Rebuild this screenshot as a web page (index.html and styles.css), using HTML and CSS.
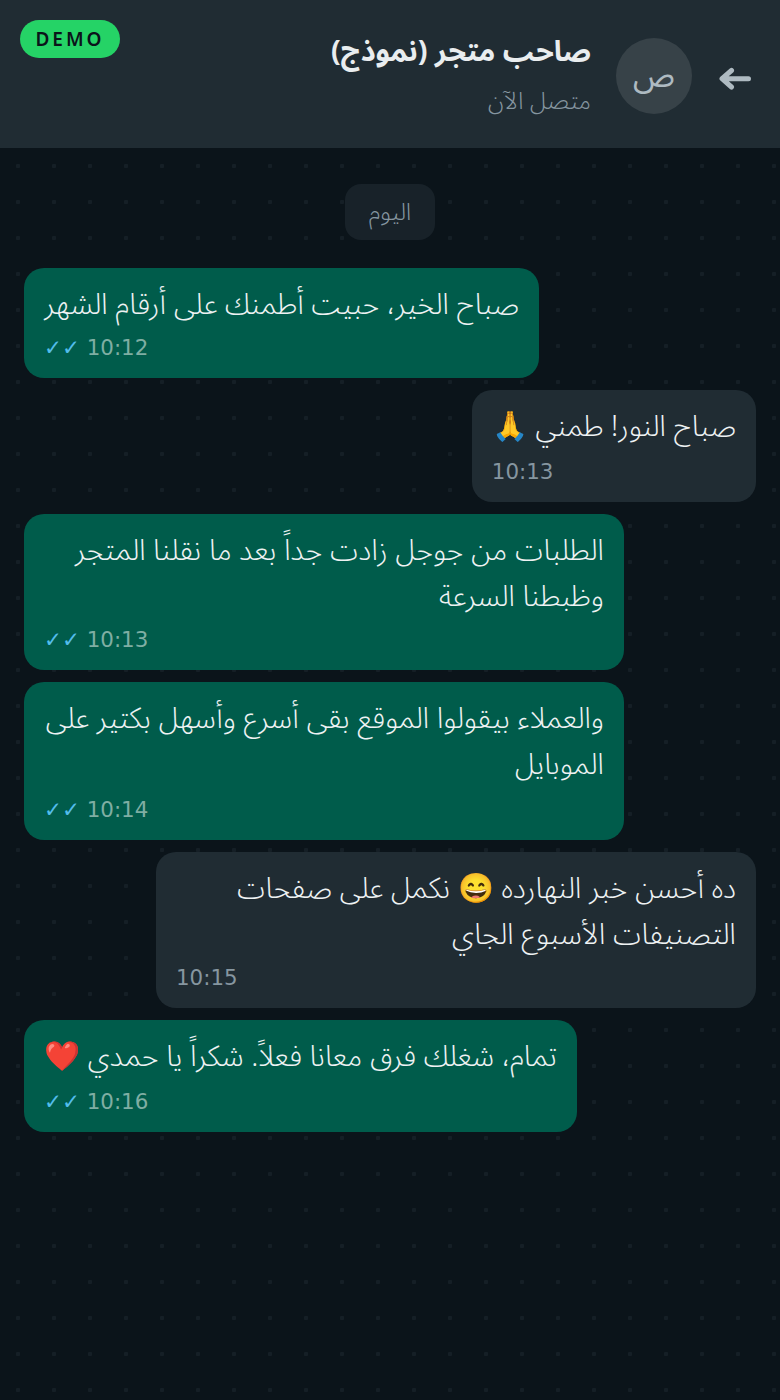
FILE: index.html
```html
<!DOCTYPE html>
<html dir="rtl">
<head>
<meta charset="utf-8">
<title>محادثة</title>
<link rel="stylesheet" href="styles.css">
</head>
<body>
<div class="app">
  <header class="topbar">
    <svg class="back" viewBox="0 0 32 24" width="32" height="24" aria-hidden="true">
      <path d="M29.500 12.700H7M12.500 4.500 3 12.700 12.500 21" fill="none" stroke="#aebac1" stroke-width="5" stroke-linecap="round" stroke-linejoin="round"/>
    </svg>
    <div class="avatar">ص</div>
    <div class="who">
      <div class="name">صاحب متجر (نموذج)</div>
      <div class="status">متصل الآن</div>
    </div>
    <span class="demo">DEMO</span>
  </header>
  <main class="chat">
    <div class="day">اليوم</div>
    <div class="msg out">
      <div class="text">صباح الخير، حبيت أطمنك على أرقام الشهر</div>
      <div class="meta"><span class="ticks">✓✓</span> <span>10:12</span></div>
    </div>
    <div class="msg in">
      <div class="text">صباح النور! طمني 🙏</div>
      <div class="meta gap"><span>10:13</span></div>
    </div>
    <div class="msg out">
      <div class="text">الطلبات من جوجل زادت جداً بعد ما نقلنا المتجر وظبطنا السرعة</div>
      <div class="meta"><span class="ticks">✓✓</span> <span>10:13</span></div>
    </div>
    <div class="msg out">
      <div class="text">والعملاء بيقولوا الموقع بقى أسرع وأسهل بكتير على الموبايل</div>
      <div class="meta gap"><span class="ticks">✓✓</span> <span>10:14</span></div>
    </div>
    <div class="msg in">
      <div class="text">ده أحسن خبر النهارده 😄 نكمل على صفحات التصنيفات الأسبوع الجاي</div>
      <div class="meta"><span>10:15</span></div>
    </div>
    <div class="msg out">
      <div class="text">تمام، شغلك فرق معانا فعلاً. شكراً يا حمدي ❤️</div>
      <div class="meta gap"><span class="ticks">✓✓</span> <span>10:16</span></div>
    </div>
  </main>
</div>
</body>
</html>
```

FILE: styles.css
```css
* { box-sizing: border-box; }
html, body { margin: 0; height: 100%; }
body {
  font-family: "Noto Sans Arabic", "DejaVu Sans", sans-serif;
  background: #0b141a;
  color: #e9edef;
}
.app { display: flex; flex-direction: column; height: 1400px; position: relative; }
.topbar {
  height: 148px;
  background: #202c33;
  display: flex;
  align-items: center;
  gap: 25px;
  padding: 4px 29px 0 24px;
}
.back { flex: none; margin: 4px 0 0 2px; }
.avatar {
  width: 76px; height: 76px; border-radius: 50%;
  background: #374248; color: #aebac1;
  font-size: 32px;
  display: flex; align-items: center; justify-content: center;
  flex: none;
}
.who { margin-top: 6px; }
.name { font-size: 28.800px; font-weight: 700; line-height: 46px; color: #e9edef; }
.status { font-size: 24px; font-weight: 300; line-height: 54px; color: #8696a0; }
.demo {
  position: absolute; top: 20px; left: 20px;
  width: 100px; height: 38px; border-radius: 19px;
  background: #25d366; color: #0b141a;
  font-family: "Noto Sans", sans-serif;
  font-size: 19px; font-weight: 600; letter-spacing: 3px;
  display: flex; align-items: center; justify-content: center;
}
.chat {
  flex: 1;
  display: flex; flex-direction: column; align-items: flex-start;
  gap: 12px;
  padding: 36px 24px 24px;
  background-color: #0b141a;
  background-image: radial-gradient(circle, #151f26 2px, transparent 2.500px);
  background-size: 36px 36px;
}
.day {
  align-self: center;
  height: 56px; padding: 0 24px; border-radius: 16px;
  background: #182229; color: #8696a0;
  font-size: 24px; font-weight: 300; display: flex; align-items: center;
  margin-bottom: 16px;
}
.msg { max-width: 600px; padding: 14px 20px; border-radius: 20px; }
.msg.in { background: #202c33; }
.msg.out { background: #005c4b; align-self: flex-end; }
.text { font-size: 29px; font-weight: 300; line-height: 46px; color: #eef2f3; }
.meta {
  direction: ltr; text-align: left;
  font-family: "DejaVu Sans", sans-serif;
  font-size: 21.400px; line-height: 32px; margin-top: 4px; color: #8696a0;
}
.meta.gap { margin-top: 6px; }
.msg.out .meta { color: #7faea3; }
.ticks { color: #53bdeb; }
```
